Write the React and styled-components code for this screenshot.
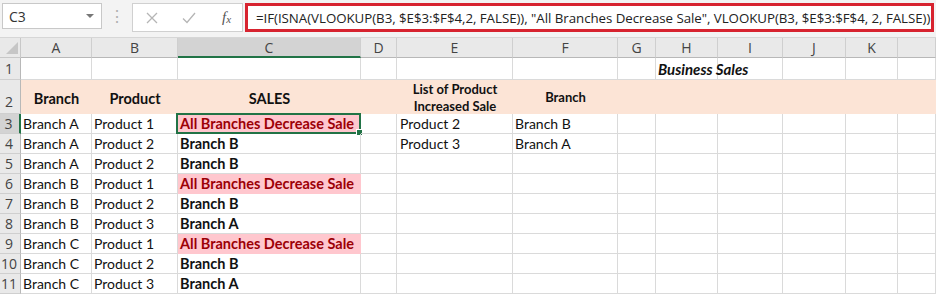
import React from 'react'
import styled, { createGlobalStyle, css } from 'styled-components'

const GlobalStyle = createGlobalStyle`
  html, body { margin: 0; padding: 0; background: #ffffff; }
  body { font-family: Lato, "Liberation Sans", sans-serif; overflow: hidden; }
`

const COLS = ['A', 'B', 'C', 'D', 'E', 'F', 'G', 'H', 'I', 'J', 'K', '']
const WIDTHS = '21px 71px 86px 183px 36px 116px 105px 38px 62px 65px 63px 52px 1fr'

const FORMULA = '=IF(ISNA(VLOOKUP(B3, $E$3:$F$4,2, FALSE)), "All Branches Decrease Sale", VLOOKUP(B3, $E$3:$F$4, 2, FALSE))'

const data = [
    ['Branch A', 'Product 1', 'All Branches Decrease Sale', 'Product 2', 'Branch B'],
    ['Branch A', 'Product 2', 'Branch B', 'Product 3', 'Branch A'],
    ['Branch A', 'Product 2', 'Branch B'],
    ['Branch B', 'Product 1', 'All Branches Decrease Sale'],
    ['Branch B', 'Product 2', 'Branch B'],
    ['Branch B', 'Product 3', 'Branch A'],
    ['Branch C', 'Product 1', 'All Branches Decrease Sale'],
    ['Branch C', 'Product 2', 'Branch B'],
    ['Branch C', 'Product 3', 'Branch A'],
]

function App() {
    return (
        <>
            <GlobalStyle />
            <Toolbar>
                <NameBox>
                    <span>C3</span>
                    <Caret />
                </NameBox>
                <Grip>⋮</Grip>
                <FxBox>
                    <FxIcon>
                        <svg width="12" height="12" viewBox="0 0 12 12">
                            <path d="M1 1 L11 11 M11 1 L1 11" stroke="#b5b5b5" strokeWidth="1.3" fill="none" />
                        </svg>
                    </FxIcon>
                    <FxIcon>
                        <svg width="14" height="12" viewBox="0 0 14 12">
                            <path d="M1 6.5 L5 10.5 L13 1" stroke="#b5b5b5" strokeWidth="1.3" fill="none" />
                        </svg>
                    </FxIcon>
                    <FxLabel>f<sub>x</sub></FxLabel>
                </FxBox>
                <FormulaBox>{FORMULA}</FormulaBox>
            </Toolbar>

            <Sheet>
                <Corner>
                    <svg width="12" height="12" viewBox="0 0 12 12">
                        <path d="M12 0 L12 12 L0 12 Z" fill="#c6c6c6" />
                    </svg>
                </Corner>
                {COLS.map((c, i) => (
                    <ColHeader key={i} $active={c === 'C'}>{c}</ColHeader>
                ))}

                <RowHeader>1</RowHeader>
                {COLS.map((c, i) => (
                    <Cell key={i}>
                        {c === 'H' && <Title>Business Sales</Title>}
                    </Cell>
                ))}

                <RowHeader $tall>2</RowHeader>
                <HeadCell>Branch</HeadCell>
                <HeadCell>Product</HeadCell>
                <HeadCell>SALES</HeadCell>
                <HeadCell />
                <HeadCell $small>List of Product<br />Increased Sale</HeadCell>
                <HeadCell $small>Branch</HeadCell>
                {COLS.slice(6).map((c, i) => <HeadCell key={i} />)}

                {data.map((row, r) => {
                    const n = r + 3
                    const sales = row[2]
                    const bad = sales && sales.startsWith('All')
                    return (
                        <React.Fragment key={n}>
                            <RowHeader $active={n === 3}>{n}</RowHeader>
                            <Cell>{row[0]}</Cell>
                            <Cell>{row[1]}</Cell>
                            <Cell $bold={!!sales} $bad={bad} $selected={n === 3}>{sales}</Cell>
                            <Cell />
                            <Cell $pad={3}>{row[3]}</Cell>
                            <Cell>{row[4]}</Cell>
                            {COLS.slice(6).map((c, i) => <Cell key={i} />)}
                        </React.Fragment>
                    )
                })}
            </Sheet>
        </>
    )
}

export default App

const Toolbar = styled.div`
    height:38px;
    box-sizing:border-box;
    display:flex;
    align-items:flex-start;
    padding-top:3px;
    background-color:#f3f3f3;
    border-bottom:1px solid #d6d6d6;
`
const NameBox = styled.div`
    width:100px;
    height:26px;
    margin-left:2px;
    box-sizing:border-box;
    display:flex;
    align-items:center;
    justify-content:space-between;
    padding:0 7px 0 6px;
    background:#ffffff;
    border:1px solid #c8c8c8;
    font-family:"Open Sans", "Noto Sans", sans-serif;
    font-size:14px;
    color:#333;
`
const Caret = styled.span`
    width:0;
    height:0;
    border-left:4px solid transparent;
    border-right:4px solid transparent;
    border-top:4px solid #777;
`
const Grip = styled.div`
    width:30px;
    text-align:center;
    color:#b0b0b0;
    font-size:16px;
    line-height:26px;
`
const FxBox = styled.div`
    width:111px;
    height:29px;
    box-sizing:border-box;
    display:flex;
    align-items:center;
    padding-left:13px;
    gap:24px;
    background:#ffffff;
    border:1px solid #d0d0d0;
`
const FxIcon = styled.span`
    display:flex;
    align-items:center;
`
const FxLabel = styled.span`
    font-family:"Liberation Serif", serif;
    font-style:italic;
    font-size:15px;
    color:#555;
    margin-left:2px;
    sub{
        font-size:11px;
        vertical-align:-1px;
    }
`
const FormulaBox = styled.div`
    flex:1;
    height:29px;
    margin:0 2px 0 2px;
    box-sizing:border-box;
    border:3px solid #d7232f;
    background:#ffffff;
    padding-left:8px;
    display:flex;
    align-items:center;
    white-space:nowrap;
    overflow:hidden;
    font-family:"Open Sans", "Noto Sans", sans-serif;
    font-size:13.3px;
    letter-spacing:-0.04px;
    color:#222;
`
const Sheet = styled.div`
    display:grid;
    grid-template-columns:${WIDTHS};
    grid-template-rows:20px 22px 34px repeat(9, 20px);
`
const headerBase = css`
    box-sizing:border-box;
    background:#e9e9e9;
    color:#444;
    font-family:"Open Sans", "Noto Sans", sans-serif;
    font-size:14px;
    display:flex;
    align-items:center;
    justify-content:center;
`
const Corner = styled.div`
    ${headerBase};
    border-right:1px solid #c8c8c8;
    border-bottom:1px solid #c8c8c8;
    justify-content:flex-end;
    align-items:flex-end;
    padding:0 2px 3px 0;
`
const ColHeader = styled.div`
    ${headerBase};
    border-right:1px solid #cfcfcf;
    border-bottom:1px solid #b8b8b8;
    ${p => p.$active && css`
        background:#d3d3d3;
        border-bottom:2px solid #217346;
    `}
`
const RowHeader = styled.div`
    ${headerBase};
    border-right:1px solid #b8b8b8;
    border-bottom:1px solid #cfcfcf;
    padding-right:2px;
    align-items:${p => (p.$tall ? 'flex-end' : 'center')};
    padding-bottom:${p => (p.$tall ? '2px' : '0')};
    ${p => p.$active && css`
        background:#d3d3d3;
        border-right:2px solid #217346;
    `}
`
const Cell = styled.div`
    position:relative;
    box-sizing:border-box;
    border-right:1px solid #dadada;
    border-bottom:1px solid #dadada;
    display:flex;
    align-items:flex-end;
    padding:0 0 1px ${p => p.$pad || 2}px;
    white-space:nowrap;
    font-size:${p => (p.$bold ? '14.5px' : '14px')};
    color:#111;
    font-weight:${p => (p.$bold ? 700 : 400)};
    ${p => p.$bad && css`
        background:#ffc7ce;
        border-color:#ffc7ce;
        color:#9c0006;
    `}
    ${p => p.$selected && css`
        &::before{
            content:'';
            position:absolute;
            top:-1px;
            left:-2px;
            right:-1px;
            bottom:-1px;
            border:2px solid #217346;
        }
        &::after{
            content:'';
            position:absolute;
            right:-3px;
            bottom:-3px;
            width:5px;
            height:5px;
            background:#217346;
            border:1px solid #ffffff;
        }
    `}
`
const HeadCell = styled.div`
    box-sizing:border-box;
    background:#fce4d6;
    display:flex;
    align-items:center;
    justify-content:center;
    text-align:center;
    font-weight:700;
    font-size:${p => (p.$small ? '13px' : '14.5px')};
    line-height:${p => (p.$small ? '17px' : 'normal')};
    color:#111;
    padding-top:${p => (p.$small ? '1px' : '2px')};
`
const Title = styled.span`
    font-weight:700;
    font-style:italic;
    font-size:15px;
`
